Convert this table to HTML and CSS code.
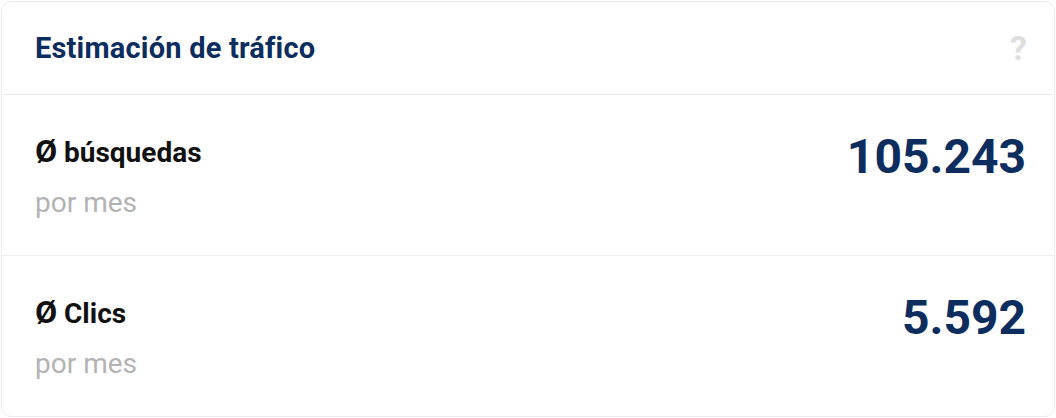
FILE: index.html
```html
<!DOCTYPE html>
<html lang="es">
<head>
  <meta charset="utf-8">
  <title>Estimación de tráfico</title>
  <link rel="stylesheet" href="styles.css">
</head>
<body>
  <div class="card">
    <div class="card-header">
      <h2 class="card-title">Estimación de tráfico</h2>
      <span class="help">?</span>
    </div>
    <div class="stat-row">
      <div class="stat-label">
        <div class="stat-name"><span class="avg">Ø</span> búsquedas</div>
        <div class="stat-unit">por mes</div>
      </div>
      <div class="stat-value">105.243</div>
    </div>
    <div class="stat-row">
      <div class="stat-label">
        <div class="stat-name"><span class="avg">Ø</span> Clics</div>
        <div class="stat-unit">por mes</div>
      </div>
      <div class="stat-value">5.592</div>
    </div>
  </div>
</body>
</html>
```

FILE: styles.css
```css
body {
  font-family: Roboto, 'Liberation Sans', sans-serif;
  background-color: #ffffff;
  margin: 0;
  padding: 1px;
}
.card {
  height: 414px;
  border: 1px solid #ececec;
  border-radius: 10px;
  background-color: #fff;
  display: flex;
  flex-direction: column;
}
.card-header {
  height: 92px;
  border-bottom: 1px solid #ebebeb;
  display: flex;
  align-items: center;
  justify-content: space-between;
  padding: 0 27px 0 33px;
}
.card-title {
  margin: 0;
  font-size: 29px;
  font-weight: 700;
  color: #0c2d5e;
  letter-spacing: 0.2px;
}
.help {
  font-size: 34px;
  font-weight: 700;
  color: #dedede;
}
.stat-row {
  flex: 1;
  display: flex;
  justify-content: space-between;
  align-items: flex-start;
  padding: 40px 28px 0 33px;
  border-bottom: 1px solid #efefef;
}
.stat-row:last-child {
  border-bottom: none;
}
.stat-name {
  font-size: 28px;
  font-weight: 700;
  line-height: 32px;
  color: #111;
}
.avg {
  font-size: 32px;
}
.stat-unit {
  font-size: 28px;
  line-height: 32px;
  margin-top: 18px;
  color: #b3b3b3;
}
.stat-value {
  font-size: 48px;
  font-weight: 700;
  line-height: 56px;
  margin-top: -6px;
  color: #0c2d5e;
}
```
